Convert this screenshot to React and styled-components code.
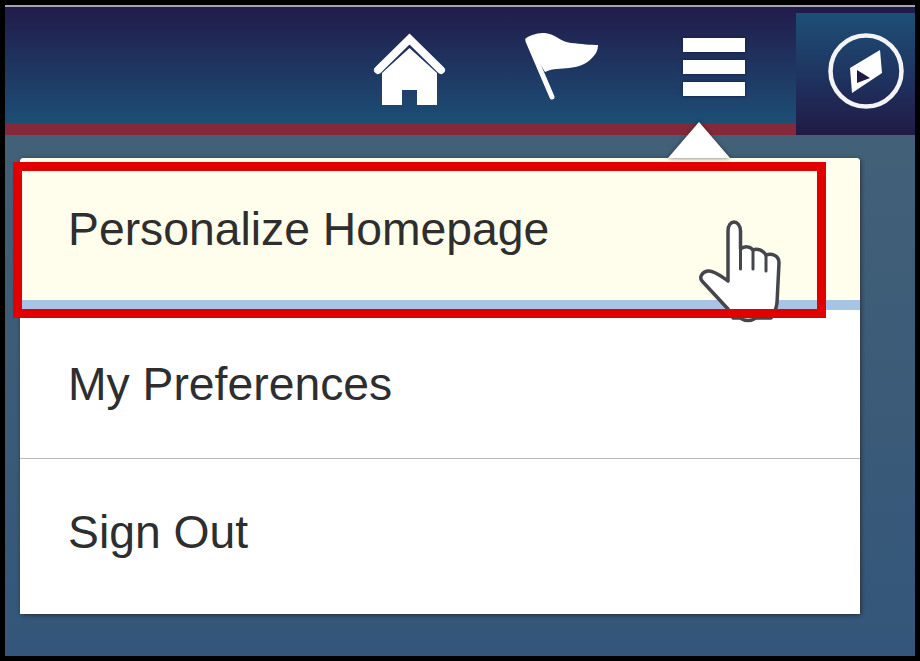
import React from "react";
import styled, { createGlobalStyle } from "styled-components";

const GlobalStyle = createGlobalStyle`
  html, body {
    margin: 0;
    padding: 0;
    background: #000;
    font-family: "Liberation Sans", Arial, sans-serif;
  }
`;

const Frame = styled.div`
  box-sizing: border-box;
  width: 910px;
  height: 651px;
  margin: 5px 0 0 5px;
  border-top: 2px solid #a5a3b4;
  display: flex;
  flex-direction: column;
  background: linear-gradient(180deg, #47637a 0%, #3d5c77 50%, #33567a 100%);
`;

const Header = styled.header`
  display: flex;
  height: 128px;
  flex-shrink: 0;
  background: #211b4a;
`;

const NavBar = styled.nav`
  box-sizing: border-box;
  flex: 1;
  display: flex;
  justify-content: flex-end;
  padding-right: 6px;
  background: linear-gradient(180deg, #221b4b 0%, #1c4e75 100%);
  border-bottom: 12px solid #84283a;
`;

const NavButton = styled.div`
  box-sizing: border-box;
  width: 152px;
  display: flex;
  justify-content: center;
  align-items: flex-start;
  padding-top: ${(p) => p.$top}px;
`;

const Burger = styled.div`
  display: flex;
  flex-direction: column;
  gap: 8px;
`;

const BurgerBar = styled.span`
  display: block;
  width: 62px;
  height: 14px;
  background: #fff;
  box-shadow: 0 0 3px #141a3a;
`;

const CompassBlock = styled.div`
  box-sizing: border-box;
  width: 119px;
  margin-top: 6px;
  padding: 18px 0 0 30px;
  background: linear-gradient(180deg, #1d4f76 0%, #1f2f5c 60%, #211a45 100%);
`;

const Menu = styled.div`
  position: relative;
  width: 840px;
  height: 456px;
  margin: 23px 0 0 15px;
  display: flex;
  flex-direction: column;
  background: #fff;
  border-radius: 4px;
  box-shadow: 1px 1px 4px rgba(30, 30, 30, 0.7);
`;

const Caret = styled.div`
  position: absolute;
  left: 648px;
  top: -36px;
  width: 0;
  height: 0;
  border-left: 31px solid transparent;
  border-right: 31px solid transparent;
  border-bottom: 36px solid #fff;
  filter: drop-shadow(0 0 2px rgba(40, 40, 40, 0.7));
`;

const MenuItem = styled.div`
  box-sizing: border-box;
  height: ${(p) => p.$height}px;
  flex-shrink: 0;
  display: flex;
  align-items: center;
  padding: 0 0 ${(p) => p.$lift || 0}px 48px;
  font-size: 46.3px;
  color: #2e2e2e;
  background: ${(p) => (p.$active ? "#fffdec" : "#fff")};
  border-bottom: ${(p) =>
    p.$active ? "10px solid #a9c3e6" : p.$divider ? "1px solid #b9b9b9" : "none"};
  border-radius: ${(p) => (p.$active ? "4px 4px 0 0" : "0")};
`;

const HandCursor = styled.svg`
  position: absolute;
  left: 676px;
  top: 61px;
`;

const Highlight = styled.div`
  position: absolute;
  box-sizing: border-box;
  left: -7px;
  top: 4px;
  width: 813px;
  height: 156px;
  border: 9.5px solid #e00000;
  pointer-events: none;
`;

const HomeIcon = () => (
  <svg width="74" height="74" viewBox="0 0 74 74">
    <path d="M5 38 L36.5 7 L68 38" fill="none" stroke="#fff" strokeWidth="8" strokeLinecap="round" />
    <path d="M36.5 16 L64 41 V73 H44 V58 H29 V73 H9 V41 Z" fill="#fff" />
  </svg>
);

const FlagIcon = () => (
  <svg width="74" height="68" viewBox="0 0 74 68">
    <path
      d="M0 6 C6 1 14 0 20 0 C30 1 36 9 46 10 C56 11 66 12 73 12 C73 18 70 22 67 25 C60 32 53 34 44 35 C36 36 28 35 20 39 Z"
      fill="#fff"
    />
    <path d="M3 8 L27 64" stroke="#fff" strokeWidth="5" strokeLinecap="round" />
  </svg>
);

const CompassIcon = () => (
  <svg width="80" height="80" viewBox="0 0 80 80">
    <circle cx="40" cy="40" r="35.5" fill="none" stroke="#f4f4f6" strokeWidth="4.5" />
    <path d="M54 19 L56 42 L26 62 L24 37 Z" fill="#fff" />
    <path d="M31 39 L31 52 L44 47 Z" fill="#211a45" />
  </svg>
);

const HandIcon = () => (
  <HandCursor width="90" height="105" viewBox="0 0 90 105">
    <path
      d="M32 62 L32 12 C32 0 44 0 44.5 12 L44.5 30 C48 27 54 27 57 31 C61 29 67 31 70 36 C75 34 83 36 83 44 L81 84 C80 92 77 96 75 99 L60 99 Q52 104 44 99 L37 99 L32 90 L6 62 C3 58 6 53 12 52 C18 51 26 58 32 62 Z"
      fill="#fff"
      stroke="#44464c"
      strokeWidth="3.5"
      strokeLinejoin="round"
    />
    <path d="M44.5 30 V50 M57 31 V50 M70 36 V52" fill="none" stroke="#44464c" strokeWidth="3" strokeLinecap="round" />
  </HandCursor>
);

export default function App() {
  return (
    <>
      <GlobalStyle />
      <Frame>
        <Header>
          <NavBar>
            <NavButton $top={25}>
              <HomeIcon />
            </NavButton>
            <NavButton $top={26}>
              <FlagIcon />
            </NavButton>
            <NavButton $top={31}>
              <Burger>
                <BurgerBar />
                <BurgerBar />
                <BurgerBar />
              </Burger>
            </NavButton>
          </NavBar>
          <CompassBlock>
            <CompassIcon />
          </CompassBlock>
        </Header>
        <Menu>
          <Caret />
          <MenuItem $active $height={152}>Personalize Homepage</MenuItem>
          <MenuItem $divider $height={149}>My Preferences</MenuItem>
          <MenuItem $height={155} $lift={9}>Sign Out</MenuItem>
          <HandIcon />
          <Highlight />
        </Menu>
      </Frame>
    </>
  );
}
